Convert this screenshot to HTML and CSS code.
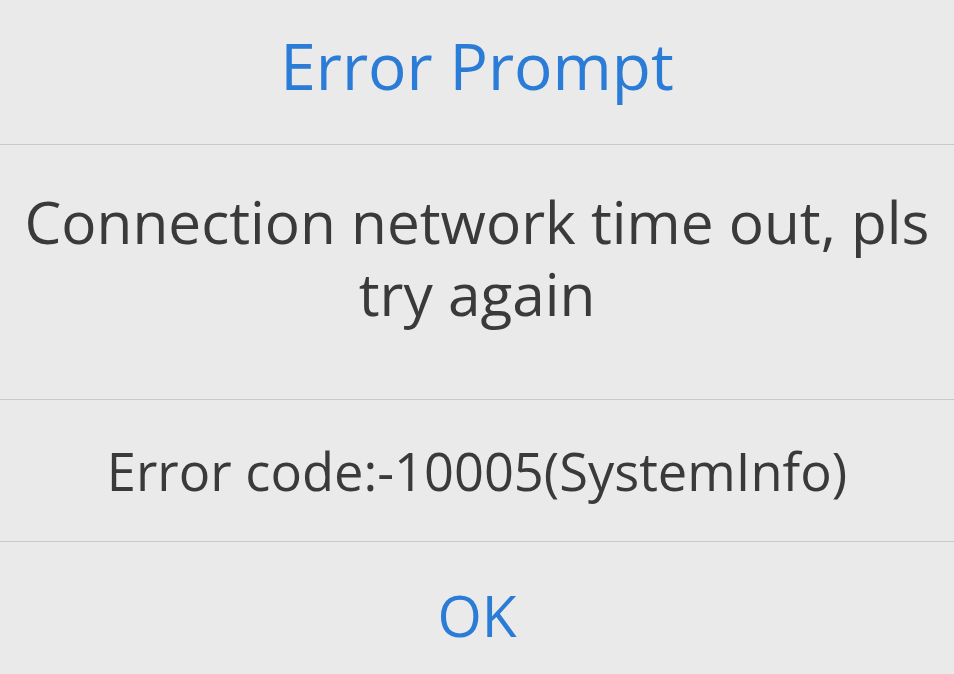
FILE: index.html
```html
<!DOCTYPE html>
<html lang="en">
<head>
    <meta charset="UTF-8">
    <title>Error Prompt</title>
    <link rel="stylesheet" href="styles.css">
</head>
<body>
    <div class="dialog">
        <div class="dialog-title">Error Prompt</div>
        <div class="dialog-message">Connection network time out, pls<br>try again</div>
        <div class="dialog-code">Error code:-10005(SystemInfo)</div>
        <button class="dialog-btn">OK</button>
    </div>
</body>
</html>
```
FILE: styles.css
```css
:root {
    --bg: #eaeaea;
    --blue: #2b7cd6;
    --text: #3a3a3a;
    --divider: #c9c9c9;
}

body {
    margin: 0;
    background-color: var(--bg);
    font-family: 'Open Sans', 'Noto Sans', sans-serif;
    color: var(--text);
}

.dialog {
    display: flex;
    flex-direction: column;
    width: 954px;
    height: 674px;
    overflow: hidden;
}

.dialog > * {
    display: flex;
    align-items: center;
    justify-content: center;
    text-align: center;
    border-bottom: 1px solid var(--divider);
    flex-shrink: 0;
    box-sizing: border-box;
}

.dialog-title {
    height: 145px;
    padding-bottom: 14px;
    color: var(--blue);
    font-size: 64px;
}

.dialog-message {
    height: 255px;
    padding-bottom: 30px;
    font-size: 58.5px;
    line-height: 72px;
}

.dialog-code {
    height: 142px;
    font-size: 52.4px;
}

.dialog-btn {
    height: 132px;
    padding: 14px 0 0;
    border: none;
    background: none;
    font-family: inherit;
    color: var(--blue);
    font-size: 57px;
}
```
